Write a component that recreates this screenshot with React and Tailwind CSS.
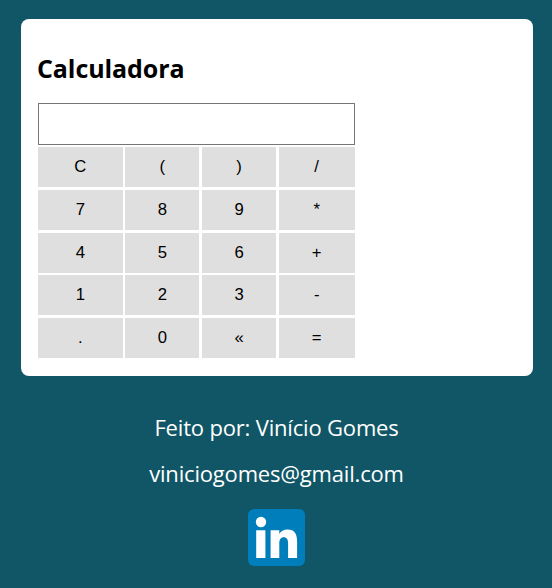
const keys = [
  "C", "(", ")", "/",
  "7", "8", "9", "*",
  "4", "5", "6", "+",
  "1", "2", "3", "-",
  ".", "0", "«", "=",
];

function LinkedInIcon() {
  return (
    <svg viewBox="0 0 57 57" className="block size-[57px]" aria-label="LinkedIn">
      <rect width="57" height="57" rx="6" fill="#007ebb" />
      <circle cx="13" cy="13" r="5.2" fill="#fff" />
      <path
        fill="#fff"
        d="M8.2 21.2h9.2V49H8.2zM22.6 21.2h8.7v3.7c1.6-2.7 4.5-4.3 8.3-4.3 7 0 9.5 4.4 9.5 12V49h-9V34.4c0-3.8-1.3-6.2-4.3-6.2-3.2 0-4.5 2.4-4.5 6.2V49h-8.7z"
      />
    </svg>
  );
}

export default function App() {
  return (
    <div className="h-[588px] w-[552px] overflow-hidden bg-[#115666] pt-[19px] font-['Open_Sans',sans-serif]">
      <main className="ml-[21px] h-[357px] w-[512px] rounded-lg bg-white pl-4 pt-8">
        <h1 className="h-[52px] text-[25px] font-bold leading-[34px] tracking-[-0.08px] text-black">Calculadora</h1>
        <input
          type="text"
          aria-label="Resultado"
          className="ml-px block h-[42px] w-[317px] border border-[#767676] bg-white px-2 text-right outline-none"
        />
        <div className="ml-[0.9px] mt-[2.3px] grid grid-cols-[84.83px_74px_74px_76px] auto-rows-[40px] gap-[2.67px]">
          {keys.map((key) => (
            <button
              key={key}
              className="bg-[#dfdfdf] text-center font-['Liberation_Sans',sans-serif] text-[16.67px] leading-[40px] text-black"
            >
              {key}
            </button>
          ))}
        </div>
      </main>
      <footer className="flex flex-col items-center pt-9 text-[22px] leading-[30px] tracking-[-0.18px] text-white">
        <p className="ml-px">Feito por: Vinício Gomes</p>
        <p className="ml-px mt-4">viniciogomes@gmail.com</p>
        <a className="mt-[21px]">
          <LinkedInIcon />
        </a>
      </footer>
    </div>
  );
}
